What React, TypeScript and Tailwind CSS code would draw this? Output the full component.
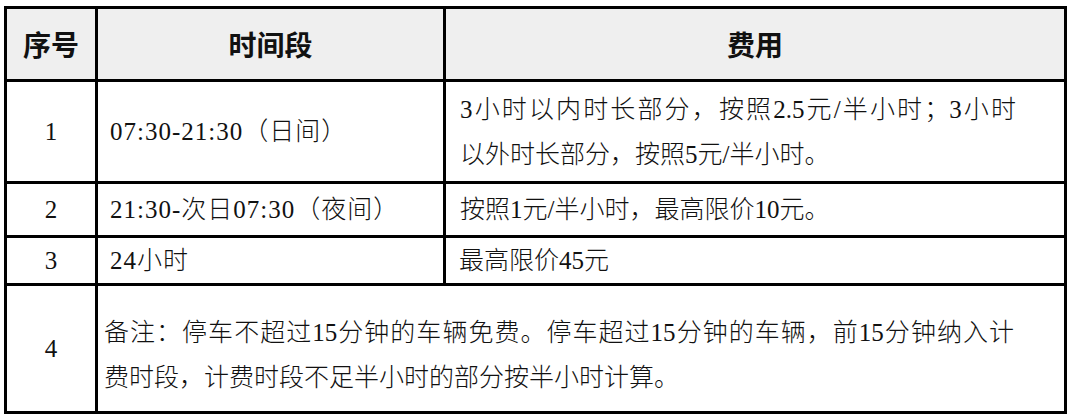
const FONT_BODY = "font-['Liberation_Serif','Noto_Sans_CJK_SC',serif]";

function Line({ children, justify = false }: { children: React.ReactNode; justify?: boolean }) {
  return (
    <span className={justify ? "block text-justify [text-align-last:justify]" : "block"}>
      {children}
    </span>
  );
}

export default function App() {
  const cell = "border-[3px] border-black";
  return (
    <div className="min-h-screen w-full bg-white pl-[4px] pt-[6px]">
      <table className="w-[1060px] table-fixed border-collapse border-[3px] border-black text-[#111]">
        <colgroup>
          <col className="w-[91px]" />
          <col className="w-[348px]" />
          <col className="w-[621px]" />
        </colgroup>
        <thead>
          <tr className="h-[73px] bg-[#efefef] font-['Noto_Sans_CJK_SC',sans-serif] text-[28px] font-bold">
            <th className={`${cell} text-center`}>序号</th>
            <th className={`${cell} text-center`}>时间段</th>
            <th className={`${cell} text-center`}>费用</th>
          </tr>
        </thead>
        <tbody className={`${FONT_BODY} text-[25px] font-light leading-[45px]`}>
          <tr className="h-[102px]">
            <td className={`${cell} text-center`}>1</td>
            <td className={`${cell} pl-[12px] tracking-[1px]`}>07:30-21:30（日间）</td>
            <td className={`${cell} pl-[14px] pr-[48px]`}>
              <Line justify>3小时以内时长部分，按照2.5元/半小时；3小时</Line>
              <Line>以外时长部分，按照5元/半小时。</Line>
            </td>
          </tr>
          <tr className="h-[54px]">
            <td className={`${cell} text-center`}>2</td>
            <td className={`${cell} pl-[12px] tracking-[1px]`}>21:30-次日07:30（夜间）</td>
            <td className={`${cell} pl-[14px]`}>按照1元/半小时，最高限价10元。</td>
          </tr>
          <tr className="h-[46px]">
            <td className={`${cell} text-center`}>3</td>
            <td className={`${cell} pl-[12px] tracking-[1px]`}>24小时</td>
            <td className={`${cell} pl-[13px]`}>最高限价45元</td>
          </tr>
          <tr className="h-[128px]">
            <td className={`${cell} text-center`}>4</td>
            <td colSpan={2} className={`${cell} pl-[6px] pr-[50px] pt-[12px]`}>
              <Line justify>备注：停车不超过15分钟的车辆免费。停车超过15分钟的车辆，前15分钟纳入计</Line>
              <Line>费时段，计费时段不足半小时的部分按半小时计算。</Line>
            </td>
          </tr>
        </tbody>
      </table>
    </div>
  );
}
